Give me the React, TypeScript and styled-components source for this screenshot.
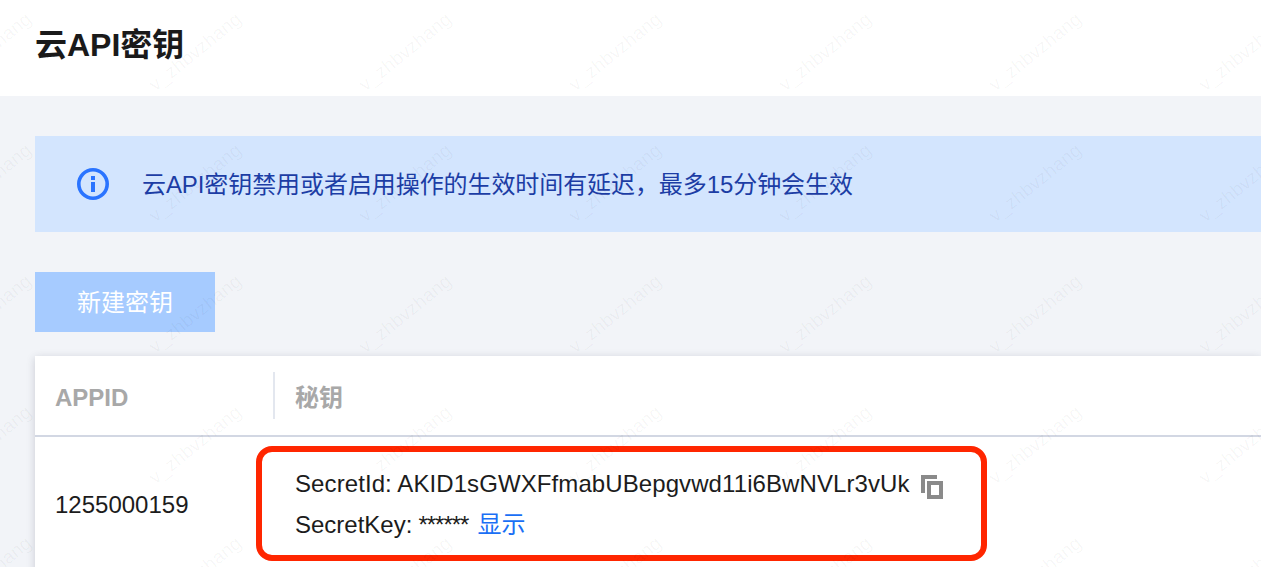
import { FunctionComponent } from "react";
import styled, { createGlobalStyle } from "styled-components";

const CJK_STACK = `"Liberation Sans", "Noto Sans CJK SC", sans-serif`;

const GlobalStyle = createGlobalStyle`
  html, body {
    margin: 0;
    padding: 0;
    height: 567px;
    overflow: hidden;
    background: #f2f4f8;
    font-family: ${CJK_STACK};
  }
`;

const Page = styled.div`
  position: relative;
  height: 567px;
  overflow: hidden;
`;

const TitleBar = styled.header`
  display: flex;
  align-items: center;
  height: 96px;
  padding: 0 0 6px 35px;
  box-sizing: border-box;
  background: #fff;
`;

const Title = styled.h1`
  margin: 0;
  font-size: 32px;
  line-height: 40px;
  font-weight: 700;
  color: #1a1a1a;
`;

const Content = styled.main`
  display: flex;
  flex-direction: column;
  padding: 40px 0 0 35px;
`;

const Notice = styled.div`
  display: flex;
  align-items: center;
  gap: 33px;
  height: 96px;
  padding-left: 42px;
  background: #d3e5fe;
  color: #1c3da5;
  font-size: 24px;
  line-height: 32px;
  letter-spacing: -0.08px;

  span {
    padding-top: 1px;
  }
`;

const CreateButton = styled.button`
  display: block;
  width: 180px;
  height: 60px;
  margin-top: 40px;
  padding: 0 0 4px;
  border: 0;
  background: #a6cbff;
  color: #fff;
  font-family: inherit;
  font-size: 24px;
`;

const Card = styled.section`
  margin-top: 24px;
  padding-bottom: 40px;
  background: #fff;
  box-shadow: 0 2px 8px rgba(54, 58, 80, 0.22);
`;

const HeadRow = styled.div`
  display: flex;
  align-items: center;
  height: 81px;
  border-bottom: 2px solid #d2d7e3;
  box-sizing: border-box;
  color: #a8a8a8;
  font-size: 24px;
  font-weight: 700;
`;

const HeadCell = styled.div<{ $first?: boolean }>`
  display: flex;
  align-items: center;
  box-sizing: border-box;
  height: 47px;
  padding: ${(p) => (p.$first ? "4px 0 0 20px" : "0 0 0 20px")};
  width: ${(p) => (p.$first ? "240px" : "auto")};
  border-right: ${(p) => (p.$first ? "2px solid #e3e7ef" : "0")};
`;

const BodyRow = styled.div`
  display: flex;
  align-items: center;
  padding-top: 9px;
  height: 124px;
  box-sizing: border-box;
  color: #1c1c1c;
  font-size: 24px;
`;

const AppIdCell = styled.div`
  width: 221px;
  padding: 3px 0 0 20px;
  box-sizing: border-box;
`;

const KeyBox = styled.div`
  display: flex;
  flex-direction: column;
  justify-content: center;
  gap: 7px;
  flex: none;
  width: 731px;
  height: 115px;
  padding: 2px 0 0 33px;
  box-sizing: border-box;
  border: 6px solid #ff2600;
  border-radius: 16px;
`;

const KeyLine = styled.div`
  display: flex;
  align-items: center;
  line-height: 34px;
  white-space: nowrap;
`;

const SecretValue = styled.span`
  letter-spacing: 0.09px;
`;

const Masked = styled.span`
  margin-left: 6px;
  letter-spacing: -1px;
`;

const CopyButton = styled.span`
  display: inline-flex;
  margin: 5px 0 0 11px;
`;

const ShowLink = styled.a`
  margin-left: 9px;
  color: #1a6ff5;
`;

const WatermarkLayer = styled.div`
  position: absolute;
  top: -14px;
  left: -120px;
  display: grid;
  grid-template-columns: repeat(7, 210px);
  grid-auto-rows: 131px;
  pointer-events: none;
`;

const WatermarkText = styled.span`
  display: flex;
  align-items: center;
  justify-content: center;
  font-family: "Liberation Sans", sans-serif;
  font-size: 19px;
  color: rgba(0, 0, 0, 0.04);
  transform: rotate(-39deg);
  white-space: nowrap;
`;

const InfoIcon: FunctionComponent = () => (
  <svg width="32" height="32" viewBox="0 0 32 32" fill="none">
    <circle cx="16" cy="16" r="14.2" stroke="#2a74ff" strokeWidth="3.6" />
    <rect x="14" y="14" width="4" height="10" fill="#2a74ff" />
    <rect x="14" y="8" width="4" height="4" fill="#2a74ff" />
  </svg>
);

const CopyIcon: FunctionComponent = () => (
  <svg width="22" height="24" viewBox="0 0 22 24" fill="none">
    <path d="M2 18V2h14" stroke="#8a8a8a" strokeWidth="4" />
    <rect x="8" y="8" width="12" height="14" stroke="#8a8a8a" strokeWidth="4" />
  </svg>
);

const App: FunctionComponent = () => {
  const marks = Array.from({ length: 35 }, (_, i) => i);

  return (
    <Page>
      <GlobalStyle />
      <TitleBar>
        <Title>云API密钥</Title>
      </TitleBar>
      <Content>
        <Notice>
          <InfoIcon />
          <span>云API密钥禁用或者启用操作的生效时间有延迟，最多15分钟会生效</span>
        </Notice>
        <div>
          <CreateButton>新建密钥</CreateButton>
        </div>
        <Card>
          <HeadRow>
            <HeadCell $first>APPID</HeadCell>
            <HeadCell>秘钥</HeadCell>
          </HeadRow>
          <BodyRow>
            <AppIdCell>1255000159</AppIdCell>
            <KeyBox>
              <KeyLine>
                <SecretValue>SecretId: AKID1sGWXFfmabUBepgvwd11i6BwNVLr3vUk</SecretValue>
                <CopyButton>
                  <CopyIcon />
                </CopyButton>
              </KeyLine>
              <KeyLine>
                SecretKey:
                <Masked>******</Masked>
                <ShowLink>显示</ShowLink>
              </KeyLine>
            </KeyBox>
          </BodyRow>
        </Card>
      </Content>
      <WatermarkLayer>
        {marks.map((i) => (
          <WatermarkText key={i}>v_zhbvzhang</WatermarkText>
        ))}
      </WatermarkLayer>
    </Page>
  );
};

export default App;
